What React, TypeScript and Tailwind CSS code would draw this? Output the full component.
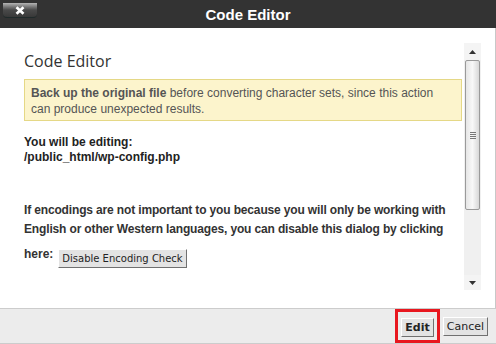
import React from 'react';

const sans = { fontFamily: '"Liberation Sans", Arial, sans-serif' };
const btnFont = { fontFamily: '"DejaVu Sans", Verdana, sans-serif' };

function Scrollbar() {
  return (
    <div className="w-[17px] shrink-0 mt-[15px] mb-[18px] flex flex-col bg-[#f0f0f0]">
      <div className="h-[17px] flex items-center justify-center bg-[#f4f4f4]">
        <svg width="7" height="4" viewBox="0 0 7 4"><path d="M3.5 0L7 4H0z" fill="#333" /></svg>
      </div>
      <div className="h-[150px] mx-[1px] rounded-[2px] border border-[#9a9a9a] bg-gradient-to-r from-[#e6e6e6] via-[#f8f8f8] to-[#d8d8d8] flex items-center justify-center">
        <div className="flex flex-col gap-[1px]">
          <div className="w-[6px] h-[1px] bg-[#777]" />
          <div className="w-[6px] h-[1px] bg-[#777]" />
          <div className="w-[6px] h-[1px] bg-[#777]" />
          <div className="w-[6px] h-[1px] bg-[#777]" />
        </div>
      </div>
      <div className="flex-1" />
      <div className="h-[15px] flex items-center justify-center bg-[#f4f4f4]">
        <svg width="7" height="4" viewBox="0 0 7 4"><path d="M0 0H7L3.5 4z" fill="#333" /></svg>
      </div>
    </div>
  );
}

export default function App() {
  return (
    <div className="w-[496px] h-[344px] flex flex-col bg-white overflow-hidden" style={sans}>
      {/* title bar */}
      <header className="relative h-[28px] shrink-0 bg-[#333333] flex items-center justify-center">
        <button className="absolute left-[3px] top-[3px] w-[34px] h-[15px] rounded-b-[4px] bg-gradient-to-b from-[#b5b5b5] via-[#4a4a4a] to-[#383838] border-b border-[#1f2a2a] flex items-center justify-center">
          <svg width="10" height="9" viewBox="0 0 10 9">
            <path d="M1.5 1.2L8.5 7.8M8.5 1.2L1.5 7.8" stroke="#fff" strokeWidth="2.6" />
          </svg>
        </button>
        <h1 className="text-white font-bold text-[15px] leading-none mt-[1px]">Code Editor</h1>
      </header>

      {/* body */}
      <div className="flex-1 flex border-r border-[#c8c8c8]">
        <div className="flex-1 pl-[24px] pr-[2px] pt-[25px] text-[#333]">
          <h2 className="text-[16px] leading-none text-[#333]" style={{ fontFamily: '"Open Sans", "Liberation Sans", sans-serif' }}>
            Code Editor
          </h2>
          <div className="mt-[10px] h-[42px] bg-[#fcf4cc] border border-[#e5d886] pl-[6px] pr-[26px] pt-[5px] text-[12px] leading-[16px] text-[#555]">
            <b>Back up the original file</b> before converting character sets, since this action can produce unexpected results.
          </div>
          <p className="mt-[14px] text-[12px] leading-[15px] font-bold text-[#222]">
            You will be editing:
            <br />
            /public_html/wp-config.php
          </p>
          <p className="mt-[36px] text-[12px] leading-[19px] font-bold text-[#333] tracking-[-0.15px]">
            If encodings are not important to you because you will only be working with English or other Western languages, you can disable this dialog by clicking
          </p>
          <div className="mt-[8px] flex items-start text-[12px] font-bold text-[#333]">
            <span className="leading-[15px]">here:</span>
            <button
              className="ml-[5px] mt-[2px] h-[19px] px-[3px] bg-[#e3e3e3] border border-t-[#fff] border-l-[#fff] border-r-[#707070] border-b-[#707070] text-[10px] font-normal text-[#222] leading-none"
              style={btnFont}
            >
              Disable Encoding Check
            </button>
          </div>
        </div>
        <div className="w-[17px] shrink-0 flex">
          <Scrollbar />
        </div>
        <div className="w-[14px] shrink-0" />
      </div>

      {/* footer */}
      <footer className="h-[36px] shrink-0 bg-[#ececec] border-t border-[#cccccc] border-b flex items-center justify-end pr-[8px] gap-[3px]">
        <div className="border-[3px] border-[#e8171f] px-[3px] py-[2px]">
          <button
            className="h-[19px] px-[3px] bg-[#e3e3e3] border border-t-[#fff] border-l-[#fff] border-r-[#707070] border-b-[#707070] text-[11px] font-bold text-[#222] leading-none"
            style={btnFont}
          >
            Edit
          </button>
        </div>
        <button
          className="h-[19px] px-[3px] bg-[#e3e3e3] border border-t-[#fff] border-l-[#fff] border-r-[#707070] border-b-[#707070] text-[11px] text-[#222] leading-none"
          style={btnFont}
        >
          Cancel
        </button>
      </footer>
    </div>
  );
}
